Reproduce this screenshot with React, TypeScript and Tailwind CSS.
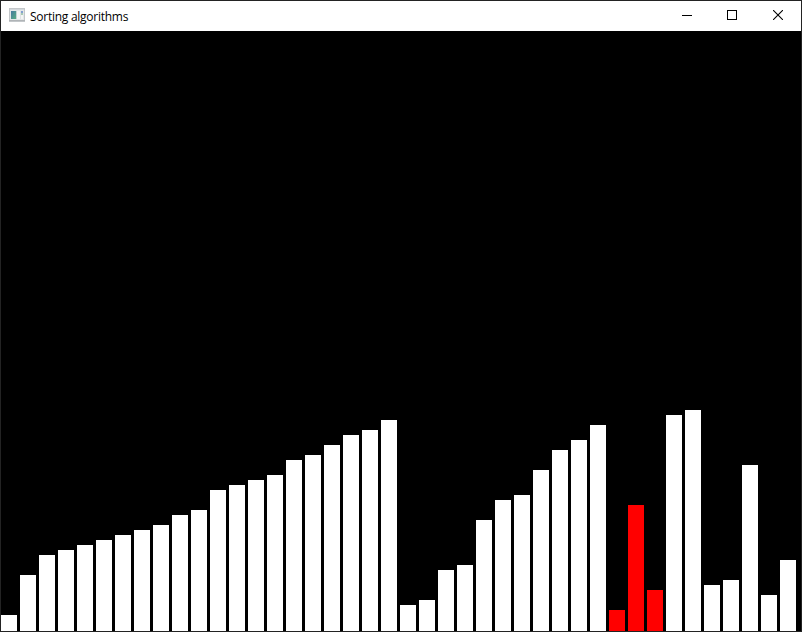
const WHITE = 'bg-white';
const RED = 'bg-[#ff0000]';

const heights = [
  16, 56, 76, 81, 86, 91, 96, 101, 106, 116, 121, 141, 146, 151, 156, 171, 176,
  186, 196, 201, 211, 26, 31, 61, 66, 111, 131, 136, 161, 181, 191, 206, 21,
  126, 41, 216, 221, 46, 51, 166, 36, 71,
];
const active = new Set([32, 33, 34]);

// Glints of the desktop behind the translucent window frame: [y, height, colour]
const glints: [number, number, string][] = [
  [49, 1, '#5c5436'], [52, 1, '#35506a'], [55, 1, '#4a6a5c'], [68, 1, '#2c5c4c'],
  [71, 1, '#2c5c4c'], [74, 1, '#2c5c4c'], [85, 2, '#5c5436'], [92, 2, '#6a4a2c'],
  [104, 8, '#6a6a48'], [112, 2, '#2c5c5c'], [144, 2, '#2c5068'], [161, 4, '#6a4420'],
  [165, 1, '#7a5c34'], [166, 4, '#5c3c1c'], [220, 1, '#5c5436'], [223, 1, '#7a5c4c'],
  [226, 1, '#5c5436'], [277, 1, '#4a5460'], [280, 1, '#5c6470'], [283, 1, '#4a5460'],
  [296, 2, '#1c4c6c'], [391, 1, '#5c5044'], [394, 1, '#6a5434'], [397, 1, '#6a5044'],
  [446, 8, '#284858'], [454, 1, '#202858'], [468, 2, '#1c4c34'], [503, 2, '#34482c'],
  [507, 1, '#34482c'], [511, 1, '#54583c'], [586, 1, '#5c5c5c'], [590, 2, '#5c4834'],
  [593, 2, '#34506a'], [603, 1, '#5c5c5c'], [607, 2, '#4c4434'], [610, 2, '#34506a'],
  [620, 1, '#5c5c5c'], [624, 3, '#34506a'],
];

function AppIcon() {
  return (
    <svg width="16" height="16" viewBox="0 0 16 16" shapeRendering="crispEdges">
      <defs>
        <linearGradient id="screen" x1="0" y1="0" x2="1" y2="1">
          <stop offset="0" stopColor="#4679a0" />
          <stop offset="1" stopColor="#58ad83" />
        </linearGradient>
      </defs>
      <rect x="0" y="1" width="16" height="14" fill="#c3c7ca" />
      <rect x="1" y="2" width="14" height="11" fill="#e4e7e9" />
      <rect x="1" y="2" width="14" height="1" fill="#d3d8dc" />
      <rect x="2" y="4" width="5" height="8" fill="url(#screen)" />
      <rect x="7" y="4" width="1" height="8" fill="#c4d4d4" />
      <rect x="8" y="4" width="4" height="8" fill="#f4f5f5" />
      <rect x="11" y="4" width="1" height="8" fill="#dfe3e5" />
      <rect x="12" y="4" width="2" height="2" fill="#829fd0" />
      <rect x="12" y="6" width="2" height="2" fill="#a6c9b5" />
      <rect x="12" y="8" width="2" height="4" fill="#f4f5f5" />
      <rect x="0" y="13" width="16" height="1" fill="#b0b4b7" />
    </svg>
  );
}

function TitleBar() {
  return (
    <header className="flex h-[30px] shrink-0 items-center bg-white pl-2">
      <div className="pb-0.5">
        <AppIcon />
      </div>
      <h1 className="ml-[5px] flex-1 whitespace-nowrap pt-0.5 font-['Open_Sans','Noto_Sans',sans-serif] text-[12px] leading-4 tracking-[-0.26px] text-black">
        Sorting algorithms
      </h1>
      <div className="flex h-[30px] items-center gap-[35px] pb-0.5 pr-[18px]">
        <button aria-label="Minimize" className="size-[10px]">
          <svg width="10" height="10" className="block" shapeRendering="crispEdges">
            <rect x="0" y="5" width="10" height="1" />
          </svg>
        </button>
        <button aria-label="Maximize" className="size-[10px] border border-black" />
        <button aria-label="Close" className="ml-px size-[10px]">
          <svg width="10" height="10" className="block" stroke="#000" strokeWidth="1.1">
            <path d="M0 0 L10 10 M10 0 L0 10" />
          </svg>
        </button>
      </div>
    </header>
  );
}

export default function App() {
  return (
    <div className="relative flex h-[632px] w-[802px] flex-col overflow-hidden border border-[#232323] bg-black">
      <TitleBar />
      <main className="flex flex-1 items-end gap-[3px] bg-black">
        {heights.map((h, i) => (
          <div
            key={i}
            className={`w-4 shrink-0 ${active.has(i) ? RED : WHITE}`}
            style={{ height: h }}
          />
        ))}
      </main>
      <svg
        width="802"
        height="632"
        className="pointer-events-none absolute -left-px -top-px"
        shapeRendering="crispEdges"
      >
        {glints.map(([y, h, c]) => (
          <rect key={y} x="0" y={y} width="1" height={h} fill={c} />
        ))}
        <rect x="0" y="11" width="1" height="2" fill="#1c4c44" />
        <rect x="801" y="448" width="1" height="4" fill="#3c4c50" />
        <rect x="157" y="631" width="5" height="1" fill="#4a4a4c" />
        <rect x="318" y="631" width="5" height="1" fill="#284444" />
        <rect x="570" y="631" width="5" height="1" fill="#284444" />
      </svg>
    </div>
  );
}
